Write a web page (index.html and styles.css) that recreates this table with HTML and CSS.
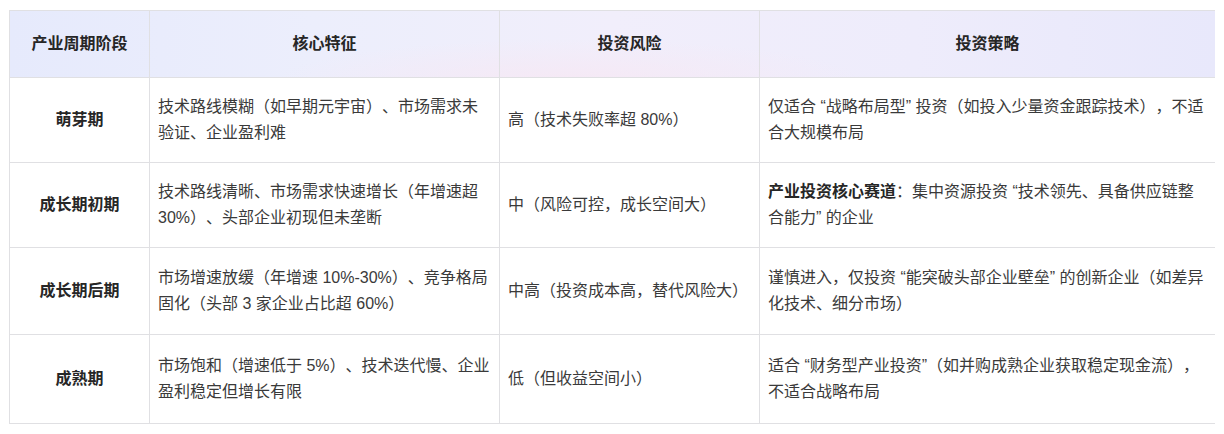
FILE: index.html
```html
<!DOCTYPE html>
<html lang="zh-CN">
<head>
<meta charset="utf-8">
<title>产业周期阶段</title>
<link rel="stylesheet" href="styles.css">
</head>
<body>
<table class="cycle-table">
  <colgroup>
    <col class="c-stage">
    <col class="c-feature">
    <col class="c-risk">
    <col class="c-strategy">
  </colgroup>
  <thead>
    <tr class="head-row">
      <th>产业周期阶段</th>
      <th>核心特征</th>
      <th>投资风险</th>
      <th>投资策略</th>
    </tr>
  </thead>
  <tbody>
    <tr>
      <td class="stage">萌芽期</td>
      <td>技术路线模糊（如早期元宇宙）、市场需求未验证、企业盈利难</td>
      <td>高（技术失败率超 80%）</td>
      <td>仅适合 “战略布局型” 投资（如投入少量资金跟踪技术），不适合大规模布局</td>
    </tr>
    <tr>
      <td class="stage">成长期初期</td>
      <td>技术路线清晰、市场需求快速增长（年增速超 30%）、头部企业初现但未垄断</td>
      <td>中（风险可控，成长空间大）</td>
      <td><strong>产业投资核心赛道</strong>：集中资源投资 “技术领先、具备供应链整合能力” 的企业</td>
    </tr>
    <tr class="row-tall">
      <td class="stage">成长期后期</td>
      <td>市场增速放缓（年增速 10%-30%）、竞争格局固化（头部 3 家企业占比超 60%）</td>
      <td>中高（投资成本高，替代风险大）</td>
      <td>谨慎进入，仅投资 “能突破头部企业壁垒” 的创新企业（如差异化技术、细分市场）</td>
    </tr>
    <tr class="row-taller">
      <td class="stage">成熟期</td>
      <td>市场饱和（增速低于 5%）、技术迭代慢、企业盈利稳定但增长有限</td>
      <td>低（但收益空间小）</td>
      <td>适合 “财务型产业投资”（如并购成熟企业获取稳定现金流），不适合战略布局</td>
    </tr>
  </tbody>
</table>
</body>
</html>
```

FILE: styles.css
```css
html, body {
  background: #ffffff;
}
body {
  margin: 10px 9px;
  font-family: "Liberation Sans", "Noto Sans CJK SC", sans-serif;
  font-size: 16px;
  color: #333333;
  text-spacing-trim: space-all;
}
.cycle-table {
  border-collapse: collapse;
  table-layout: fixed;
  width: 1206px;
}
.c-stage { width: 140px; }
.c-feature { width: 350px; }
.c-risk { width: 260px; }
.c-strategy { width: 456px; }

.cycle-table th,
.cycle-table td {
  border: 1px solid #e0e0e3;
  line-height: 26px;
  vertical-align: middle;
  text-spacing-trim: space-all;
}
.cycle-table th {
  padding: 20px 8px;
  font-weight: 700;
  text-align: center;
  color: #262626;
}
.head-row {
  background:
    radial-gradient(ellipse 420px 60px at 560px 70px, rgba(246, 232, 244, 0.9), rgba(246, 232, 244, 0) 70%),
    linear-gradient(90deg, #e6eafc 0%, #eceefc 25%, #f1eefb 50%, #eeecfb 75%, #e8e8fb 100%);
}
.cycle-table td {
  padding: 16px 8px 16px 8px;
  text-align: left;
  color: #3a3a3a;
}
.cycle-table td.stage {
  text-align: center;
  font-weight: 700;
  color: #262626;
}
.cycle-table strong {
  font-weight: 700;
  color: #262626;
}
.row-tall td { padding-top: 17px; padding-bottom: 17px; }
.row-taller td { padding-top: 18px; padding-bottom: 18px; }
```
